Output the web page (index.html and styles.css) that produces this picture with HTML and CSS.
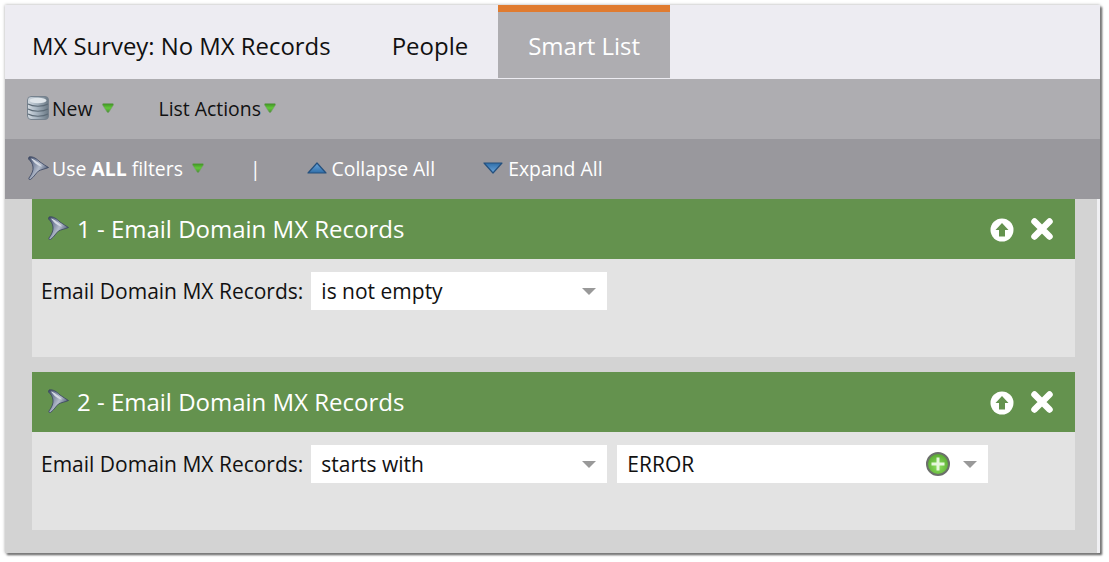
FILE: index.html
```html
<!DOCTYPE html>
<html lang="en">
<head>
    <meta charset="UTF-8">
    <title>Smart List</title>
    <link rel="stylesheet" href="styles.css">
</head>
<body>
    <svg class="defs" width="0" height="0">
        <defs>
            <linearGradient id="funnel-fill" x1="0" y1="0" x2="1" y2="0.600">
                <stop offset="0" stop-color="#3d4964"/>
                <stop offset="0.350" stop-color="#7f8aa2"/>
                <stop offset="0.600" stop-color="#b4bccb"/>
                <stop offset="0.850" stop-color="#6c7890"/>
                <stop offset="1" stop-color="#2f3a55"/>
            </linearGradient>
            <linearGradient id="green-fill" x1="0" y1="0" x2="0" y2="1">
                <stop offset="0" stop-color="#3f8f25"/>
                <stop offset="0.500" stop-color="#62c83a"/>
                <stop offset="1" stop-color="#4a8f35"/>
            </linearGradient>
            <linearGradient id="drum-fill" x1="0" y1="0" x2="1" y2="0">
                <stop offset="0" stop-color="#d3dae1"/>
                <stop offset="0.400" stop-color="#aab7c3"/>
                <stop offset="1" stop-color="#6b7985"/>
            </linearGradient>
            <linearGradient id="blue-fill" x1="0" y1="0" x2="0" y2="1">
                <stop offset="0" stop-color="#2f6ea8"/>
                <stop offset="1" stop-color="#6ba6dc"/>
            </linearGradient>
            <linearGradient id="blue-fill-down" x1="0" y1="0" x2="0" y2="1">
                <stop offset="0" stop-color="#6ba6dc"/>
                <stop offset="1" stop-color="#2f6ea8"/>
            </linearGradient>
            <radialGradient id="plus-fill" cx="0.500" cy="0.600" r="0.600">
                <stop offset="0" stop-color="#8fe35f"/>
                <stop offset="1" stop-color="#55a52f"/>
            </radialGradient>
            <symbol id="funnel" viewBox="0 0 22 24">
                <path d="M2 1 C6 0 10 3 13 6 C16 8 19 10 21.500 11.500 C18 13 14 13.500 11.500 15 C9 17 7 21 3.500 23.500 C2 24 1.500 23 2 22 C5 18 6.500 14 6 11 C5.500 7 3.500 5 1.500 3 Z" fill="url(#funnel-fill)" stroke="#39445f" stroke-width="0.800"/>
                <path d="M4 2.500 C7 3 12 7 15 10.500 C11 10 7 7 4 2.500 Z" fill="#d5dae4"/>
            </symbol>
            <symbol id="arrow-down" viewBox="0 0 12 10">
                <path d="M1.500 0.500 H10.500 C11.500 0.500 11.800 1.500 11.300 2.200 L7 9 C6.500 9.700 5.500 9.700 5 9 L0.700 2.200 C0.200 1.500 0.500 0.500 1.500 0.500 Z" fill="url(#green-fill)" stroke="#7d9a74" stroke-width="0.600"/>
            </symbol>
            <symbol id="up-circle" viewBox="0 0 24 24">
                <circle cx="12" cy="12" r="11.500" fill="#fff"/>
                <path d="M12 5 L18.500 12 H15 V18.500 H9 V12 H5.500 Z" fill="#64924e"/>
            </symbol>
            <symbol id="cross" viewBox="0 0 24 24">
                <path d="M4.500 4.500 L19.500 19.500 M19.500 4.500 L4.500 19.500" stroke="#fff" stroke-width="6.500" stroke-linecap="round"/>
            </symbol>
        </defs>
    </svg>

    <div class="frame">
        <div class="tabs">
            <div class="tab tab-title">MX Survey: No MX Records</div>
            <div class="tab tab-people">People</div>
            <div class="tab tab-active">Smart List</div>
        </div>

        <div class="toolbar">
            <svg class="icon-drum" viewBox="0 0 22 24">
                <rect x="0.500" y="0.500" width="21" height="23" rx="3.500" fill="url(#drum-fill)" stroke="#76828e"/>
                <path d="M1 8 C6 11 16 11 21 8 M1 13 C6 16 16 16 21 13 M1 18 C6 21 16 21 21 18" fill="none" stroke="#5c6a76" stroke-width="1.200"/>
                <ellipse cx="11" cy="4.500" rx="8.500" ry="2.800" fill="#dfe5ea"/>
            </svg>
            <span class="tool-label">New</span>
            <svg class="arrow arrow-new"><use href="#arrow-down"/></svg>
            <span class="tool-label tool-list">List Actions</span>
            <svg class="arrow arrow-list"><use href="#arrow-down"/></svg>
        </div>

        <div class="filterbar">
            <svg class="icon-funnel"><use href="#funnel"/></svg>
            <span class="filter-label">Use <b>ALL</b> filters</span>
            <svg class="arrow arrow-filter"><use href="#arrow-down"/></svg>
            <span class="divider">|</span>
            <svg class="tri tri-up" viewBox="0 0 20 12"><path d="M10 1 L19 11 H1 Z" fill="url(#blue-fill-down)" stroke="#24507e" stroke-width="1.200" stroke-linejoin="round"/></svg>
            <span class="filter-label">Collapse All</span>
            <svg class="tri tri-down" viewBox="0 0 20 12"><path d="M1 1 H19 L10 11 Z" fill="url(#blue-fill)" stroke="#24507e" stroke-width="1.200" stroke-linejoin="round"/></svg>
            <span class="filter-label">Expand All</span>
        </div>

        <div class="content">
            <div class="card">
                <div class="card-head">
                    <svg class="icon-funnel"><use href="#funnel"/></svg>
                    <span class="card-title">1 - Email Domain MX Records</span>
                    <svg class="icon-up"><use href="#up-circle"/></svg>
                    <svg class="icon-x"><use href="#cross"/></svg>
                </div>
                <div class="card-body">
                    <span class="field-label">Email Domain MX Records:</span>
                    <div class="select">
                        <span>is not empty</span>
                        <span class="caret"></span>
                    </div>
                </div>
            </div>

            <div class="card">
                <div class="card-head">
                    <svg class="icon-funnel"><use href="#funnel"/></svg>
                    <span class="card-title">2 - Email Domain MX Records</span>
                    <svg class="icon-up"><use href="#up-circle"/></svg>
                    <svg class="icon-x"><use href="#cross"/></svg>
                </div>
                <div class="card-body">
                    <span class="field-label">Email Domain MX Records:</span>
                    <div class="select">
                        <span>starts with</span>
                        <span class="caret"></span>
                    </div>
                    <div class="select select-value">
                        <span>ERROR</span>
                        <svg class="icon-plus" viewBox="0 0 24 24">
                            <circle cx="12" cy="12" r="11" fill="url(#plus-fill)" stroke="#6b6f6b" stroke-width="2"/>
                            <path d="M12 5.500 V18.500 M5.500 12 H18.500" stroke="#e6f7dc" stroke-width="3"/>
                        </svg>
                        <span class="caret"></span>
                    </div>
                </div>
            </div>
        </div>
    </div>
</body>
</html>
```

FILE: styles.css
```css
body {
    font-family: "Open Sans", Arial, sans-serif;
    margin: 0;
    padding: 5px 0 9px 5px;
    background-color: #fff;
}
.defs {
    display: block;
    height: 0;
}
.frame {
    width: 1095px;
    height: 548px;
    background-color: #f0f0f3;
    box-shadow: 0 0 3px #aaa, 2px 2px 2px #555;
}
.tabs {
    display: flex;
    height: 74px;
    background-color: #edecf2;
    font-size: 24px;
    color: #111;
}
.tab {
    padding: 23px 0 0 61px;
    line-height: 36px;
}
.tab-title {
    padding-left: 27px;
    font-size: 23.9px;
}
.tab-active {
    width: 172px;
    height: 74px;
    box-sizing: border-box;
    margin-left: 30px;
    padding: 16px 0 0 30px;
    background-color: #aeadb1;
    border-top: 7px solid #e07b30;
    border-bottom: 1px solid #edecf2;
    color: #fff;
}
.toolbar, .filterbar {
    display: flex;
    align-items: center;
    height: 60px;
    padding: 0 0 2px 22px;
    box-sizing: border-box;
    font-size: 19.4px;
}
.toolbar {
    background-color: #aeadb1;
    color: #111;
}
.filterbar {
    background-color: #99989d;
    color: #fff;
}
.icon-drum {
    width: 22px;
    height: 24px;
    margin-right: 3px;
}
.icon-funnel {
    width: 22px;
    height: 24px;
    margin-right: 3px;
}
.arrow {
    width: 12px;
    height: 10px;
}
.arrow-new {
    margin-left: 9px;
}
.tool-list {
    margin-left: 45px;
}
.arrow-list {
    margin-left: 3px;
}
.arrow-filter {
    margin-left: 9px;
}
.divider {
    margin: 0 46px;
}
.tri {
    width: 20px;
    height: 12px;
    margin-right: 5px;
}
.tri-down {
    margin-left: 48px;
}
.content {
    width: 1092px;
    height: 354px;
    background-color: #d3d3d3;
    padding-left: 27px;
    box-sizing: border-box;
}
.card {
    width: 1043px;
    margin-bottom: 15px;
    background-color: #e3e3e3;
}
.card-head {
    display: flex;
    align-items: center;
    height: 60px;
    padding: 0 0 2px 15px;
    box-sizing: border-box;
    background-color: #64924e;
    color: #fff;
    font-size: 24px;
}
.card-head .icon-funnel {
    margin-right: 8px;
}
.card-title {
    flex: 1;
}
.icon-up {
    width: 24px;
    height: 24px;
    margin: 4px 16px 0 0;
}
.icon-x {
    width: 24px;
    height: 24px;
    margin: 2px 21px 0 0;
}
.card-body {
    display: flex;
    align-items: flex-start;
    height: 98px;
    box-sizing: border-box;
    padding: 13px 0 0 9px;
    font-size: 21px;
    line-height: 37px;
    color: #111;
}
.field-label {
    padding-top: 1px;
    margin-right: 8px;
}
.select {
    display: flex;
    align-items: center;
    justify-content: space-between;
    width: 296px;
    height: 38px;
    box-sizing: border-box;
    padding: 0 11px 0 10px;
    background-color: #fff;
}
.select-value {
    width: 371px;
    margin-left: 10px;
}
.select-value span:first-child {
    flex: 1;
}
.icon-plus {
    width: 24px;
    height: 24px;
    margin-right: 13px;
}
.caret {
    width: 0;
    height: 0;
    border-left: 7px solid transparent;
    border-right: 7px solid transparent;
    border-top: 7px solid #999;
}
```
